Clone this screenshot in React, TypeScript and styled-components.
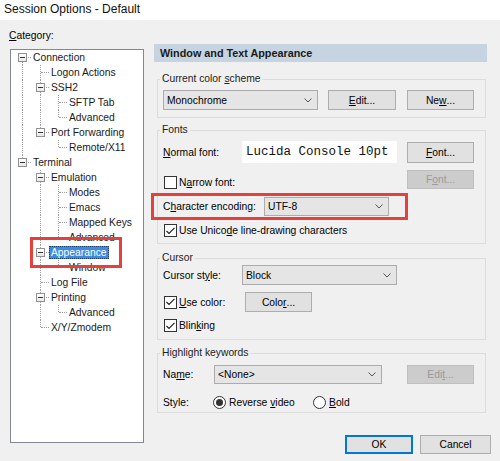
import React from 'react'
import styled, { createGlobalStyle, css } from 'styled-components'

const GlobalStyle = createGlobalStyle`
  html, body {
    margin: 0;
    padding: 0;
    background: #f0f0f0;
  }
`

const Window = styled.div`
  position: relative;
  width: 500px;
  height: 461px;
  overflow: hidden;
  background: #f0f0f0;
  font-family: "Liberation Sans", Arial, sans-serif;
  font-size: 10.3px;
  color: #000;
`

const TitleBar = styled.div`
  height: 20px;
  line-height: 19px;
  padding-left: 4px;
  background: #fff;
  font-size: 12px;
  color: #111;
`

const Main = styled.div`
  display: flex;
  padding-left: 10px;
`

const LeftCol = styled.div`
  width: 134px;
  display: flex;
  flex-direction: column;
`

const CategoryLabel = styled.div`
  margin: 10px 0 0 -1px;
  line-height: 12px;
`

const TreeBox = styled.div`
  margin-top: 7px;
  height: 394px;
  box-sizing: border-box;
  border: 1px solid #828790;
  background: #fff;
  padding-left: 2px;
`

const TreeRow = styled.div`
  display: flex;
  align-items: center;
  height: 15px;
`

const Guide = styled.span<{ $line: boolean }>`
  position: relative;
  width: 18px;
  height: 15px;
  flex: none;
  ${(p) =>
    p.$line &&
    css`
      &::before {
        content: '';
        position: absolute;
        left: 9px;
        top: 0;
        height: 15px;
        border-left: 1px dotted #a0a0a0;
      }
    `}
`

const Connector = styled.span<{ $first: boolean; $last: boolean }>`
  position: relative;
  display: flex;
  align-items: center;
  width: 18px;
  height: 15px;
  flex: none;
  &::before {
    content: '';
    position: absolute;
    left: 9px;
    top: ${(p) => (p.$first ? 7 : 0)}px;
    bottom: ${(p) => (p.$last ? 8 : 0)}px;
    border-left: 1px dotted #a0a0a0;
  }
  &::after {
    content: '';
    position: absolute;
    left: 10px;
    top: 7px;
    width: 8px;
    border-top: 1px dotted #a0a0a0;
  }
`

const Expander = styled.span`
  position: relative;
  z-index: 1;
  box-sizing: border-box;
  width: 9px;
  height: 9px;
  margin-left: 5px;
  margin-top: -1px;
  border: 1px solid #919191;
  background: linear-gradient(#ffffff, #e8e8e8);
  &::after {
    content: '';
    position: absolute;
    left: 1px;
    top: 3px;
    width: 5px;
    height: 1px;
    background: #333;
  }
`

const NodeLabel = styled.span<{ $selected?: boolean }>`
  padding: 0 2px;
  line-height: 13px;
  white-space: nowrap;
  color: #1a1a1a;
  ${(p) =>
    p.$selected &&
    css`
      background: #3b8be3;
      color: #fff;
      outline: 1px dotted #1b3f6e;
      outline-offset: -1px;
    `}
`

const RightCol = styled.div`
  width: 337px;
  margin-left: 10px;
  display: flex;
  flex-direction: column;
`

const Header = styled.div`
  margin: 24px 4px 0 0;
  height: 18px;
  line-height: 18px;
  padding-left: 6px;
  background: #c6d4e1;
  font-weight: bold;
  font-size: 10.8px;
  color: #1a1a1a;
`

const Group = styled.div<{ $mt: number; $pb: number }>`
  margin: ${(p) => p.$mt}px 5px 0 3px;
  border: 1px solid #dcdcdc;
  padding: 0 11px ${(p) => p.$pb}px 5px;
  display: flex;
  flex-direction: column;
`

const GroupTitle = styled.span`
  align-self: flex-start;
  margin: -7px 0 0 -3px;
  padding: 0 2px;
  line-height: 12px;
  background: #f0f0f0;
  color: #222;
`

const Row = styled.div<{ $mt: number; $h: number; $align?: string }>`
  display: flex;
  align-items: ${(p) => p.$align || 'center'};
  margin-top: ${(p) => p.$mt}px;
  height: ${(p) => p.$h}px;
`

const Label = styled.span<{ $w: number }>`
  width: ${(p) => p.$w}px;
  flex: none;
  white-space: nowrap;
`

const Button = styled.div<{ $w: number; $h?: number; $disabled?: boolean; $default?: boolean; $ml?: number }>`
  box-sizing: border-box;
  width: ${(p) => p.$w}px;
  height: ${(p) => p.$h || 20}px;
  margin-left: ${(p) => (p.$ml === undefined ? 'auto' : `${p.$ml}px`)};
  display: flex;
  align-items: center;
  justify-content: center;
  flex: none;
  background: ${(p) => (p.$disabled ? '#cccccc' : '#e1e1e1')};
  border: 1px solid ${(p) => (p.$disabled ? '#bfbfbf' : p.$default ? '#0078d7' : '#adadad')};
  color: ${(p) => (p.$disabled ? '#9a9a9a' : '#000')};
  ${(p) => p.$default && css`box-shadow: inset 0 0 0 1px #0078d7;`}
`

const SelectBox = styled.div<{ $w: number; $h?: number }>`
  box-sizing: border-box;
  width: ${(p) => p.$w}px;
  height: ${(p) => p.$h || 20}px;
  display: flex;
  align-items: center;
  justify-content: space-between;
  flex: none;
  padding: 0 5px 0 3px;
  background: #e5e5e5;
  border: 1px solid #acacac;
  color: #000;
`

const FontPreview = styled.div`
  box-sizing: border-box;
  width: 155px;
  height: 22px;
  display: flex;
  align-items: center;
  padding-left: 4px;
  background: #fff;
  font-family: "Liberation Mono", "DejaVu Sans Mono", monospace;
  font-size: 12.5px;
  color: #111;
`

const CheckLabel = styled.label<{ $w?: number }>`
  display: flex;
  align-items: center;
  gap: 2px;
  margin-left: 1px;
  ${(p) => p.$w && css`width: ${p.$w}px; flex: none;`}
  white-space: nowrap;
`

const Box = styled.span`
  box-sizing: border-box;
  width: 13px;
  height: 13px;
  flex: none;
  border: 1px solid #333;
  background: #fff;
  display: flex;
  align-items: center;
  justify-content: center;
`

const RadioCircle = styled.span<{ $on?: boolean }>`
  box-sizing: border-box;
  width: 13px;
  height: 13px;
  flex: none;
  border: 1px solid #333;
  border-radius: 50%;
  background: #fff;
  display: flex;
  align-items: center;
  justify-content: center;
  &::after {
    content: '';
    width: 7px;
    height: 7px;
    border-radius: 50%;
    background: ${(p) => (p.$on ? '#333' : 'transparent')};
  }
`

const RadioLabel = styled.label<{ $w?: number }>`
  display: flex;
  align-items: center;
  gap: 3px;
  ${(p) => p.$w && css`width: ${p.$w}px; flex: none;`}
  white-space: nowrap;
`

const Footer = styled.div`
  display: flex;
  justify-content: flex-end;
  gap: 7px;
  margin-top: 22px;
`

const Annotation = styled.div<{ $x: number; $y: number; $w: number; $h: number }>`
  position: absolute;
  left: ${(p) => p.$x}px;
  top: ${(p) => p.$y}px;
  width: ${(p) => p.$w}px;
  height: ${(p) => p.$h}px;
  box-sizing: border-box;
  border: 3px solid #e4403c;
  pointer-events: none;
`

const U = styled.span`
  text-decoration: underline;
  text-underline-offset: 1px;
`

const Chevron = () => (
  <svg width="8" height="5" viewBox="0 0 8 5">
    <polyline points="0.5,0.5 4,4 7.5,0.5" fill="none" stroke="#555" strokeWidth="1" />
  </svg>
)

const Check = ({ on }: { on: boolean }) => (
  <Box>
    {on && (
      <svg width="9" height="8" viewBox="0 0 9 8">
        <polyline points="0.5,4 3,6.5 8.5,0.8" fill="none" stroke="#222" strokeWidth="1.2" />
      </svg>
    )}
  </Box>
)

type Node = { name: string; children?: Node[]; selected?: boolean }

const tree: Node[] = [
  {
    name: 'Connection',
    children: [
      { name: 'Logon Actions' },
      { name: 'SSH2', children: [{ name: 'SFTP Tab' }, { name: 'Advanced' }] },
      { name: 'Port Forwarding', children: [{ name: 'Remote/X11' }] },
    ],
  },
  {
    name: 'Terminal',
    children: [
      { name: 'Emulation', children: [{ name: 'Modes' }, { name: 'Emacs' }, { name: 'Mapped Keys' }, { name: 'Advanced' }] },
      { name: 'Appearance', selected: true, children: [{ name: 'Window' }] },
      { name: 'Log File' },
      { name: 'Printing', children: [{ name: 'Advanced' }] },
      { name: 'X/Y/Zmodem' },
    ],
  },
]

type Flat = { node: Node; guides: boolean[]; first: boolean; last: boolean }

const flatten = (nodes: Node[], guides: boolean[], root: boolean): Flat[] =>
  nodes.flatMap((node, i) => {
    const last = i === nodes.length - 1
    const row: Flat = { node, guides, first: root && i === 0, last }
    return [row, ...(node.children ? flatten(node.children, [...guides, !last], false) : [])]
  })

const rows = flatten(tree, [], true)

export default function App() {
  return (
    <Window>
      <GlobalStyle />
      <TitleBar>Session Options - Default</TitleBar>
      <Main>
        <LeftCol>
          <CategoryLabel>
            <U>C</U>ategory:
          </CategoryLabel>
          <TreeBox>
            {rows.map((r, i) => (
              <TreeRow key={i}>
                {r.guides.map((g, j) => (
                  <Guide key={j} $line={g} />
                ))}
                <Connector $first={r.first} $last={r.last}>
                  {r.node.children && <Expander />}
                </Connector>
                <NodeLabel $selected={r.node.selected}>{r.node.name}</NodeLabel>
              </TreeRow>
            ))}
          </TreeBox>
        </LeftCol>

        <RightCol>
          <Header>Window and Text Appearance</Header>

          <Group $mt={17} $pb={7}>
            <GroupTitle>
              Current color <U>s</U>cheme
            </GroupTitle>
            <Row $mt={5} $h={20}>
              <SelectBox $w={155}>
                Monochrome
                <Chevron />
              </SelectBox>
              <Button $w={68} $ml={10}>
                <U>E</U>dit...
              </Button>
              <Button $w={67}>
                Ne<U>w</U>...
              </Button>
            </Row>
          </Group>

          <Group $mt={12} $pb={6}>
            <GroupTitle>Fonts</GroupTitle>
            <Row $mt={5} $h={22}>
              <Label $w={79}>
                <U>N</U>ormal font:
              </Label>
              <FontPreview>Lucida Console 10pt</FontPreview>
              <Button $w={67} $h={21}>
                <U>F</U>ont...
              </Button>
            </Row>
            <Row $mt={6} $h={20} $align="flex-end">
              <CheckLabel>
                <Check on={false} />
                <span>
                  N<U>a</U>rrow font:
                </span>
              </CheckLabel>
              <Button $w={67} $h={19} $disabled>
                F<U>o</U>nt...
              </Button>
            </Row>
            <Row $mt={8} $h={19}>
              <Label $w={101}>
                C<U>h</U>aracter encoding:
              </Label>
              <SelectBox $w={125} $h={19}>
                UTF-8
                <Chevron />
              </SelectBox>
            </Row>
            <Row $mt={8} $h={13}>
              <CheckLabel>
                <Check on />
                <span>
                  Use Unico<U>d</U>e line-drawing characters
                </span>
              </CheckLabel>
            </Row>
          </Group>

          <Group $mt={14} $pb={7}>
            <GroupTitle>Cursor</GroupTitle>
            <Row $mt={1} $h={20}>
              <Label $w={79}>
                Cursor st<U>y</U>le:
              </Label>
              <SelectBox $w={155}>
                Block
                <Chevron />
              </SelectBox>
            </Row>
            <Row $mt={7} $h={20}>
              <CheckLabel $w={81}>
                <Check on />
                <span>
                  <U>U</U>se color:
                </span>
              </CheckLabel>
              <Button $w={67} $ml={0}>
                Colo<U>r</U>...
              </Button>
            </Row>
            <Row $mt={7} $h={13}>
              <CheckLabel>
                <Check on />
                <span>
                  Blin<U>k</U>ing
                </span>
              </CheckLabel>
            </Row>
          </Group>

          <Group $mt={13} $pb={3}>
            <GroupTitle>Highlight keywords</GroupTitle>
            <Row $mt={6} $h={19}>
              <Label $w={51}>
                Na<U>m</U>e:
              </Label>
              <SelectBox $w={168} $h={19}>
                &lt;None&gt;
                <Chevron />
              </SelectBox>
              <Button $w={67} $h={19} $disabled>
                Edi<U>t</U>...
              </Button>
            </Row>
            <Row $mt={12} $h={13}>
              <Label $w={50}>Style:</Label>
              <RadioLabel $w={100}>
                <RadioCircle $on />
                <span>
                  Reverse <U>v</U>ideo
                </span>
              </RadioLabel>
              <RadioLabel>
                <RadioCircle />
                <span>
                  <U>B</U>old
                </span>
              </RadioLabel>
            </Row>
          </Group>

          <Footer>
            <Button $w={68} $h={19} $ml={0} $default>
              OK
            </Button>
            <Button $w={71} $h={19} $ml={0}>
              Cancel
            </Button>
          </Footer>
        </RightCol>
      </Main>

      <Annotation $x={30} $y={237} $w={92} $h={31} />
      <Annotation $x={151} $y={193} $w={257} $h={27} />
    </Window>
  )
}
